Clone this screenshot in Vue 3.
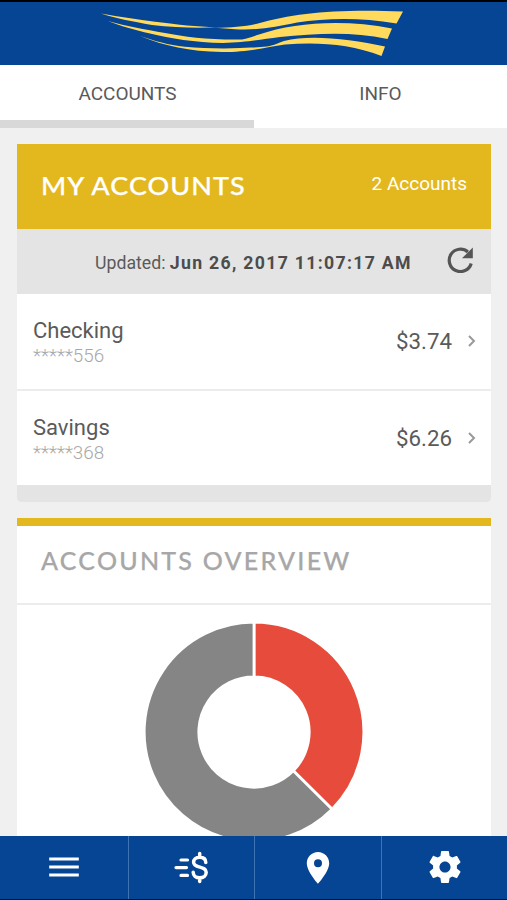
<script setup>
import {computed,ref} from "vue"

const tabs=["ACCOUNTS","INFO"]
const active=ref(0)

const accounts=ref([
    {name:"Checking",number:"*****556",balance:3.74},
    {name:"Savings",number:"*****368",balance:6.26}
])

// donut slices, clockwise from 12 o'clock
const colors=["#e64b3b","#858585"]
const outer=109.8
const inner=55.2

const point=(r,a)=>{
    return `${(r*Math.sin(a)).toFixed(2)} ${(-r*Math.cos(a)).toFixed(2)}`
}

const slices=computed(()=>{
    let total=accounts.value.reduce((sum,a)=>sum+a.balance,0)
    let start=0
    return accounts.value.map((a,i)=>{
        let end=start+a.balance/total*Math.PI*2
        let large=end-start>Math.PI ? 1 : 0
        let d=`M${point(outer,start)}A${outer} ${outer} 0 ${large} 1 ${point(outer,end)}`
            +`L${point(inner,end)}A${inner} ${inner} 0 ${large} 0 ${point(inner,start)}Z`
        start=end
        return {d,color:colors[i]}
    })
})
</script>

<template>
    <div class="screen">
        <header class="top">
            <svg class="logo" viewBox="0 0 330 65">
                <path d="M11 13.500C30 17 48 19.500 65 21.800C90 25 105 26.500 127 27.300C105 28.300 85 27.500 62 25C42 21.500 25 18 11 13.500Z" />
                <path d="M125 27.800C142 27.500 155 26.500 168 23.500C205 13 245 9 313 11.500L306.500 23.500C270 17 236 18 207 22.500C185 27 168 30.500 145 29.200Z" />
                <path d="M18 21C35 26 55 29.500 75 33C95 37 120 40 152 39.500C158 38.500 163 36.500 169 34.500C205 22 255 19 302 28.500L297.500 39C260 31 225 34 190 37C170 39.500 157 42.500 133 43C105 42.500 80 38.500 60 33.500C45 30 30 26 18 21Z" />
                <path d="M50 36C65 41 78 45 95 46.800C120 49 150 49 177 46.500C185 45 188 43 194 41C220 34 260 39 295 46.500L291.500 56C260 44 229 42 195 44.500C175 47.500 159 52 132 52C99 51.500 75 46 50 36Z" />
            </svg>
        </header>

        <nav class="tabs">
            <div v-for="(tab,i) in tabs" :key="tab" class="tab" :class="{active:active===i}" @click="active=i">{{ tab }}</div>
        </nav>

        <main class="content">
            <section class="card accounts">
                <div class="title">
                    <h2>MY ACCOUNTS</h2>
                    <span class="count">{{ accounts.length }} Accounts</span>
                </div>
                <div class="updated">
                    <span>Updated: <b>Jun 26, 2017 11:07:17 AM</b></span>
                    <svg class="refresh" viewBox="0 0 26 26">
                        <path d="M24.200 16.500A11.200 11.200 0 1 1 20.900 5" fill="none" stroke="#555" stroke-width="3.200" />
                        <path d="M25.800 0.500V11.300H15Z" fill="#555" />
                    </svg>
                </div>
                <div v-for="account in accounts" :key="account.name" class="row">
                    <div class="who">
                        <div class="name">{{ account.name }}</div>
                        <div class="number">{{ account.number }}</div>
                    </div>
                    <div class="balance">${{ account.balance.toFixed(2) }}</div>
                    <svg class="chevron" viewBox="0 0 8 12">
                        <path d="M1 1L6 6L1 11" />
                    </svg>
                </div>
                <div class="foot"></div>
            </section>

            <section class="card overview">
                <h2>ACCOUNTS OVERVIEW</h2>
                <div class="chart">
                    <svg viewBox="-110 -110 220 220">
                        <path v-for="slice in slices" :key="slice.color" :d="slice.d" :fill="slice.color" />
                    </svg>
                </div>
            </section>
        </main>

        <footer class="bottom">
            <a class="item">
                <svg viewBox="0 0 36 36">
                    <path d="M4.800 10H31.200M4.800 18H31.200M4.800 26H31.200" class="line" stroke-width="3.200" stroke-linecap="square" />
                </svg>
            </a>
            <a class="item">
                <svg viewBox="0 0 36 36">
                    <path d="M7 11H13.500M2 18.600H12.500M7 26.400H13.500" class="line" stroke-width="3.200" stroke-linecap="round" />
                    <path d="M31.800 13.500C31.800 10.500 29.800 8.200 25.700 8.200S19.600 10.500 19.600 13.200C19.600 19.800 32.200 16.500 32.200 23.200C32.200 26.800 29.500 28.800 25.700 28.800S19.200 26.800 19.200 23.200M25.700 4.600V7.800M25.700 28.800V32.400" class="line" stroke-width="3.500" stroke-linecap="round" />
                </svg>
            </a>
            <a class="item">
                <svg viewBox="0 0 36 36">
                    <path fill-rule="evenodd" d="M18 3C11.800 3 6.800 8 6.800 14.200C6.800 22.500 18 34.700 18 34.700S29.200 22.500 29.200 14.200C29.200 8 24.200 3 18 3ZM18 18.200A4 4 0 1 1 18 10.200A4 4 0 0 1 18 18.200Z" />
                </svg>
            </a>
            <a class="item">
                <svg viewBox="0.7 0.7 22.600 22.600">
                    <path d="M19.430 12.980c.04-.32.07-.64.07-.98s-.03-.66-.07-.98l2.110-1.650c.19-.15.24-.42.12-.64l-2-3.460c-.12-.22-.39-.3-.61-.22l-2.490 1c-.52-.4-1.080-.73-1.690-.98l-.38-2.650C14.460 2.180 14.250 2 14 2h-4c-.25 0-.46.18-.49.42l-.38 2.650c-.61.25-1.170.59-1.690.98l-2.490-1c-.23-.09-.49 0-.61.22l-2 3.460c-.13.22-.07.49.12.64l2.110 1.650c-.04.32-.07.65-.07.98s.03.66.07.98l-2.110 1.650c-.19.15-.24.42-.12.64l2 3.460c.12.22.39.3.61.22l2.490-1c.52.4 1.080.73 1.690.98l.38 2.650c.03.24.24.42.49.42h4c.25 0 .46-.18.49-.42l.38-2.650c.61-.25 1.170-.59 1.690-.98l2.490 1c.23.09.49 0 .61-.22l2-3.460c.12-.22.07-.49-.12-.64l-2.110-1.650zM12 15.500c-1.930 0-3.500-1.570-3.500-3.500s1.570-3.500 3.500-3.500 3.500 1.570 3.500 3.500-1.570 3.500-3.500 3.500z" />
                </svg>
            </a>
        </footer>
    </div>
</template>

<style>
body{
    background: #f0f0f0;
}
</style>

<style scoped>
.screen{
    height: 900px;
    box-sizing: border-box;
    border-top: 2px solid #000;
    border-bottom: 1px solid #001a45;
    display: flex;
    flex-direction: column;
    overflow: hidden;
    background: #f0f0f0;
    color: #5a5a5a;
    font-family: Roboto, "Liberation Sans", sans-serif;
}
.top{
    flex: none;
    height: 63px;
    background: #064594;
    overflow: hidden;
}
.logo{
    display: block;
    width: 330px;
    height: 65px;
    margin: -2px auto 0 90px;
    fill: #ffda5c;
}

.tabs{
    flex: none;
    display: flex;
    height: 63px;
    background: #fff;
}
.tab{
    flex: 1;
    box-sizing: border-box;
    padding: 0 0 7px;
    border-bottom: 8px solid transparent;
    display: flex;
    align-items: flex-end;
    justify-content: center;
    font-size: 19px;
    line-height: 39px;
}
.tab.active{
    padding-left: 1px;
    border-bottom-color: #d8d8d8;
}

.content{
    flex: 1;
    min-height: 0;
    overflow: hidden;
    padding: 16px 16px 0 17px;
    display: flex;
    flex-direction: column;
    gap: 16px;
}
.card{
    flex: none;
    background: #fff;
}
h2{
    margin: 0;
    font-family: Lato, sans-serif;
    font-weight: 500;
    font-size: 25px;
    line-height: 30px;
    -webkit-text-stroke: 0.25px currentColor;
}

.accounts{
    border-radius: 0 0 4px 4px;
    overflow: hidden;
}
.title{
    height: 85px;
    box-sizing: border-box;
    padding: 27px 24px 0;
    display: flex;
    justify-content: space-between;
    background: #e3b81f;
    color: #fff;
}
/* wide caps */
.title h2{
    margin-top: -1px;
    letter-spacing: 1px;
    transform: scaleX(1.08);
    transform-origin: 0 0;
}
.count{
    font-size: 19px;
    line-height: 26px;
}
.updated{
    height: 65px;
    box-sizing: border-box;
    padding: 2px 18px 0 78px;
    display: flex;
    align-items: center;
    justify-content: space-between;
    background: #e4e4e4;
    font-size: 17.7px;
    white-space: nowrap;
}
.updated b{
    letter-spacing: 1.3px;
    color: #4c4c4c;
}
.refresh{
    width: 26px;
    height: 26px;
    margin-top: -5px;
}

.row{
    height: 97px;
    box-sizing: border-box;
    padding: 0 15px 2px 16px;
    border-bottom: 2px solid #ececec;
    display: flex;
    align-items: center;
}
.row + .row{
    height: 94px;
    padding-bottom: 0;
    border-bottom: none;
}
.who{
    flex: 1;
    padding-top: 4px;
}
.name{
    font-size: 22px;
    line-height: 26px;
}
.number{
    font-size: 18.8px;
    font-weight: 300;
    line-height: 24px;
    color: #a8a8a8;
}
.balance{
    font-size: 22.3px;
}
.chevron{
    width: 8px;
    height: 12px;
    margin-left: 16px;
    fill: none;
    stroke: #999;
    stroke-width: 2;
}
.foot{
    height: 17px;
    background: #e4e4e4;
}

.overview{
    border-top: 8px solid #e3b81f;
}
.overview h2{
    height: 79px;
    box-sizing: border-box;
    padding: 19px 24px 0;
    border-bottom: 2px solid #ececec;
    color: #a7a7a7;
    letter-spacing: 2.25px;
}
.chart{
    padding-top: 17px;
    display: flex;
    justify-content: center;
}
.chart svg{
    width: 220px;
    height: 220px;
}
.chart path{
    stroke: #fff;
    stroke-width: 2.8;
}

.bottom{
    flex: none;
    height: 63px;
    display: grid;
    grid-template-columns: 128px 126px 127px 126px;
    background: #064594;
}
.item{
    display: flex;
    align-items: center;
    justify-content: center;
    padding-bottom: 2px;
}
.item + .item{
    border-left: 1px solid #3f74b3;
}
.item svg{
    width: 36px;
    height: 36px;
    fill: #fff;
}
.item .line{
    fill: none;
    stroke: #fff;
}
</style>
